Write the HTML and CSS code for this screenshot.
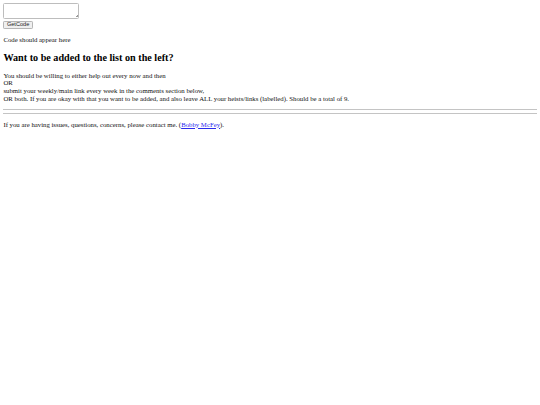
FILE: index.html
```html
<!DOCTYPE html>
<html>
<head>
<meta charset="utf-8">
<title>Get Code</title>
<link rel="stylesheet" href="styles.css">
</head>
<body class="page">
<textarea class="code-input"></textarea>
<button class="get-btn">GetCode</button>
<p class="output">Code should appear here</p>
<h2 class="title">Want to be added to the list on the left?</h2>
<p class="info">You should be willing to either help out every now and then<br>OR<br>submit your weekly/main link every week in the comments section below,<br>OR both. If you are okay with that you want to be added, and also leave ALL your heists/links (labelled). Should be a total of 9.</p>
<hr class="rule">
<hr class="rule">
<p class="contact">If you are having issues, questions, concerns, please contact me. (<a class="contact-link" href="#">Bobby McFey</a>).</p>
</body>
</html>
```
FILE: styles.css
```css
html {
  background: #ffffff;
}
.page {
  margin: 3.4px;
  font-family: "Liberation Serif", "Times New Roman", serif;
  font-size: 6.78px;
  line-height: 7.67px;
  color: #111111;
}
.code-input {
  display: block;
  box-sizing: border-box;
  width: 76px;
  height: 15.2px;
  margin: 0 0 2.4px;
  padding: 0;
  border: 1px solid #bdbdbd;
  border-radius: 1.5px;
  resize: none;
  background-color: #ffffff;
  background-image: linear-gradient(135deg, transparent 0 55%, #9a9a9a 55% 70%, transparent 70% 80%, #9a9a9a 80% 92%, transparent 92%);
  background-size: 3px 3px;
  background-position: right 0.5px bottom 0.5px;
  background-repeat: no-repeat;
}
.get-btn {
  display: block;
  box-sizing: border-box;
  width: 29.4px;
  height: 7.8px;
  padding: 0;
  font-family: "Liberation Sans", Arial, sans-serif;
  font-size: 5.6px;
  line-height: 5.6px;
  color: #222222;
  background: #efefef;
  border: 1px solid #b5b5b5;
  border-radius: 1.2px;
}
.output {
  margin: 6.78px 0;
}
.title {
  font-size: 10.17px;
  line-height: 11.5px;
  margin: 8.44px 0;
  color: #000000;
}
.info {
  margin: 6.78px 0;
}
.rule {
  height: 0;
  margin: 3.4px 0 2.8px;
  border: 0;
  border-top: 1px solid #c4c4c4;
}
.rule + .rule {
  margin: 0 0 3.4px;
}
.contact {
  margin: 6.78px 0;
}
.contact-link {
  color: #2a2aee;
}
```
